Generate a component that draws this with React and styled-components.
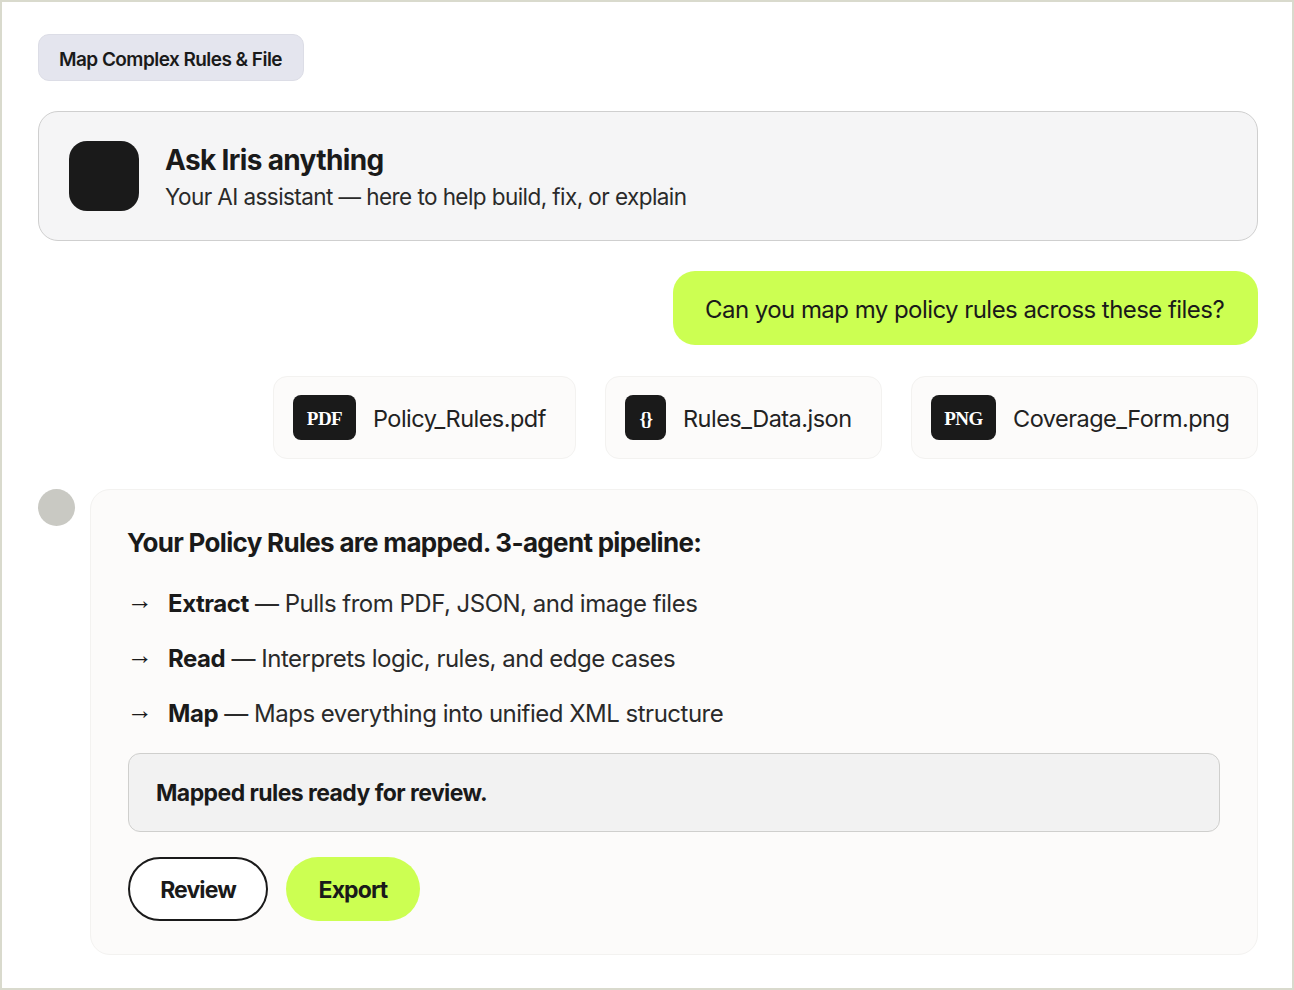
import React from "react";
import styled, { createGlobalStyle } from "styled-components";

const GlobalStyle = createGlobalStyle`
  html, body {
    margin: 0;
    padding: 0;
    background: #fff;
  }
  * {
    box-sizing: border-box;
  }
`;

const Frame = styled.div`
  width: 1294px;
  height: 990px;
  border: 2px solid #d9dacd;
  background: #fff;
  padding: 32px 34px 0 36px;
  font-family: Inter, "Liberation Sans", sans-serif;
  color: #1a1a1a;
  display: flex;
  flex-direction: column;
  overflow: hidden;
`;

const Tag = styled.div`
  align-self: flex-start;
  height: 47px;
  width: 266px;
  display: flex;
  align-items: center;
  padding: 4px 0 0 20px;
  background: #e4e5ee;
  border: 1px solid #dcdde6;
  border-radius: 11px;
  font-size: 19px;
  font-weight: 600;
  letter-spacing: -0.55px;
  white-space: nowrap;
`;

const Intro = styled.div`
  margin-top: 30px;
  height: 130px;
  display: flex;
  align-items: center;
  gap: 26px;
  padding-left: 30px;
  background: #f5f5f6;
  border: 1px solid #cfcfcf;
  border-radius: 20px;
`;

const IrisMark = styled.div`
  width: 70px;
  height: 70px;
  border-radius: 18px;
  background: #1a1a1a;
`;

const IntroText = styled.div`
  display: flex;
  flex-direction: column;
  gap: 6px;
  padding-top: 1px;
`;

const IntroTitle = styled.div`
  font-size: 28px;
  line-height: 34px;
  font-weight: 650;
  letter-spacing: -0.65px;
`;

const IntroSub = styled.div`
  font-size: 22.5px;
  line-height: 28px;
  letter-spacing: -0.57px;
  color: #2a2a2a;
`;

const Bubble = styled.div`
  margin-top: 30px;
  align-self: flex-end;
  width: 585px;
  height: 74px;
  display: flex;
  align-items: center;
  padding: 2px 0 0 32px;
  background: #ccff52;
  border-radius: 22px;
  font-size: 24px;
  letter-spacing: -0.55px;
  white-space: nowrap;
`;

const Files = styled.div`
  margin-top: 31px;
  display: flex;
  justify-content: flex-end;
  gap: 29px;
`;

const FileCard = styled.div`
  width: ${(p) => p.$w}px;
  height: 83px;
  display: flex;
  align-items: center;
  gap: 17px;
  padding-left: 19px;
  background: #fcfbfa;
  border: 1px solid #f3f2f0;
  border-radius: 14px;
`;

const FileBadge = styled.div`
  width: ${(p) => p.$w}px;
  height: 45px;
  display: flex;
  align-items: center;
  justify-content: center;
  padding-top: 2px;
  border-radius: 8px;
  background: #1a1a1a;
  color: #fff;
  font-family: "Liberation Serif", serif;
  font-size: 19px;
  font-weight: 700;
  letter-spacing: ${(p) => (p.$tight ? "-1.5px" : "-0.5px")};
`;

const FileName = styled.div`
  padding-top: 1px;
  font-size: 23.5px;
  letter-spacing: -0.52px;
  color: #222;
  white-space: nowrap;
`;

const Reply = styled.div`
  margin-top: 30px;
  display: flex;
  align-items: flex-start;
  gap: 15px;
`;

const Avatar = styled.div`
  width: 37px;
  height: 37px;
  flex: none;
  border-radius: 50%;
  background: #c9c9c3;
`;

const ReplyCard = styled.div`
  flex: 1;
  height: 466px;
  padding: 37px 37px 0;
  background: #fcfbfa;
  border: 1px solid #f3f2f0;
  border-radius: 20px;
`;

const ReplyTitle = styled.div`
  margin-left: -1px;
  font-size: 26px;
  line-height: 32px;
  font-weight: 650;
  letter-spacing: -0.69px;
`;

const Steps = styled.ul`
  list-style: none;
  margin: 17px 0 0 -1px;
  padding: 0;
  display: flex;
  flex-direction: column;
`;

const Step = styled.li`
  height: 55px;
  display: flex;
  align-items: center;
  font-size: 24px;
  letter-spacing: -0.5px;
  color: #2a2a2a;
  white-space: nowrap;
`;

const Arrow = styled.span`
  width: 41px;
  flex: none;
  padding-bottom: 6px;
  font-family: "Liberation Serif", serif;
  font-size: 26px;
  color: #1a1a1a;
`;

const StepName = styled.strong`
  font-weight: 650;
  letter-spacing: -0.45px;
  color: #1a1a1a;
`;

const Ready = styled.div`
  margin-top: 12px;
  height: 79px;
  display: flex;
  align-items: center;
  padding-left: 27px;
  background: #f2f2f2;
  border: 1px solid #cfcfcd;
  border-radius: 12px;
  font-size: 23px;
  font-weight: 650;
  letter-spacing: -0.57px;
`;

const Actions = styled.div`
  margin-top: 25px;
  display: flex;
  gap: 18px;
`;

const Button = styled.button`
  height: 64px;
  width: ${(p) => p.$w}px;
  border-radius: 32px;
  border: ${(p) => (p.$primary ? "none" : "2px solid #1a1a1a")};
  background: ${(p) => (p.$primary ? "#ccff52" : "#fff")};
  color: #1a1a1a;
  font-family: inherit;
  font-size: 23px;
  font-weight: 650;
  letter-spacing: -0.9px;
  padding: 2px 0 0;
`;

const files = [
  { badge: "PDF", badgeW: 63, name: "Policy_Rules.pdf", w: 303 },
  { badge: "{}", badgeW: 41, name: "Rules_Data.json", w: 277, tight: true },
  { badge: "PNG", badgeW: 65, name: "Coverage_Form.png", w: 347 },
];

const steps = [
  { name: "Extract", text: "Pulls from PDF, JSON, and image files" },
  { name: "Read", text: "Interprets logic, rules, and edge cases" },
  { name: "Map", text: "Maps everything into unified XML structure" },
];

export default function App() {
  return (
    <>
      <GlobalStyle />
      <Frame>
        <Tag>Map Complex Rules &amp; File</Tag>
        <Intro>
          <IrisMark />
          <IntroText>
            <IntroTitle>Ask Iris anything</IntroTitle>
            <IntroSub>Your AI assistant — here to help build, fix, or explain</IntroSub>
          </IntroText>
        </Intro>
        <Bubble>Can you map my policy rules across these files?</Bubble>
        <Files>
          {files.map((f) => (
            <FileCard key={f.name} $w={f.w}>
              <FileBadge $w={f.badgeW} $tight={f.tight}>{f.badge}</FileBadge>
              <FileName>{f.name}</FileName>
            </FileCard>
          ))}
        </Files>
        <Reply>
          <Avatar />
          <ReplyCard>
            <ReplyTitle>Your Policy Rules are mapped. 3-agent pipeline:</ReplyTitle>
            <Steps>
              {steps.map((s) => (
                <Step key={s.name}>
                  <Arrow>→</Arrow>
                  <span>
                    <StepName>{s.name}</StepName> — {s.text}
                  </span>
                </Step>
              ))}
            </Steps>
            <Ready>Mapped rules ready for review.</Ready>
            <Actions>
              <Button $w={140}>Review</Button>
              <Button $w={134} $primary>
                Export
              </Button>
            </Actions>
          </ReplyCard>
        </Reply>
      </Frame>
    </>
  );
}
